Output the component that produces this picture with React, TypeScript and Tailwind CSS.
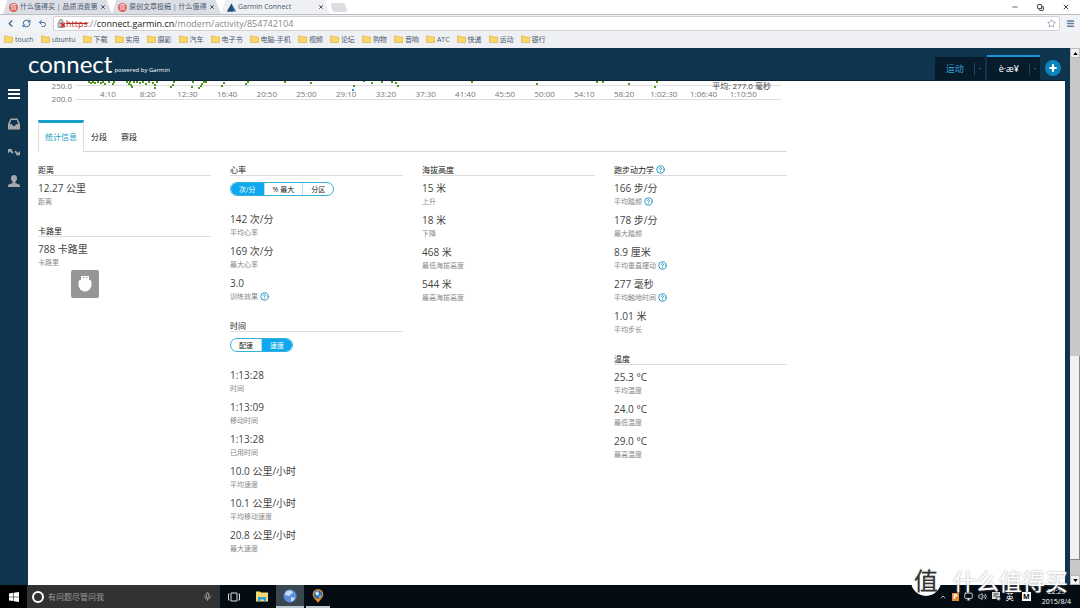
import { Menu, Minus, Mic, Plus, RefreshCw, Star, Undo2, X, ChevronLeft, ChevronUp, CircleHelp, Copy, Volume2, Monitor } from 'lucide-react'

type Stat = { value: string; label: string; help?: boolean }

const browserTabs = [
  { title: '什么值得买 | 品质消费第', color: 'bg-[#dd5f5b]', active: false },
  { title: '原创文章投稿 | 什么值得', color: 'bg-[#dd5f5b]', active: false },
  { title: 'Garmin Connect', color: '', active: true },
]

const bookmarks = ['touch', 'ubuntu', '下载', '实用', '摄影', '汽车', '电子书', '电脑-手机', '视频', '论坛', '购物', '音响', 'ATC', '快递', '运动', '银行']

const ticks = ['4:10', '8:20', '12:30', '16:40', '20:50', '25:00', '29:10', '33:20', '37:30', '41:40', '45:50', '50:00', '54:10', '58:20', '1:02:30', '1:06:40', '1:10:50']

const dots = [
  [60, 1], [62, 2], [64, 1], [66, 2], [69, 1], [72, 2], [74, 1], [76, 3], [80, 1], [84, 3], [85, 1], [98, 1], [100, 3], [101, 1], [102, 4], [103, 6], [105, 1], [108, 1],
  [111, 2], [114, 1], [117, 3], [120, 1], [124, 2], [126, 4], [126, 7], [128, 1], [142, 6], [144, 4], [145, 1], [163, 6], [164, 1], [170, 7], [172, 5], [173, 3], [175, 1], [177, 1],
  [193, 5], [195, 2], [217, 3], [219, 1], [256, 1], [282, 2], [325, 5], [335, 0], [343, 2], [353, 1], [363, 1], [367, 2], [369, 5], [443, 1], [508, 3], [568, 1], [574, 1], [600, 3], [626, 6], [628, 1],
]

const distance: Stat[] = [{ value: '12.27 公里', label: '距离' }]
const calories: Stat[] = [{ value: '788 卡路里', label: '卡路里' }]
const heartRate: Stat[] = [
  { value: '142 次/分', label: '平均心率' },
  { value: '169 次/分', label: '最大心率' },
  { value: '3.0', label: '训练效果', help: true },
]
const timing: Stat[] = [
  { value: '1:13:28', label: '时间' },
  { value: '1:13:09', label: '移动时间' },
  { value: '1:13:28', label: '已用时间' },
  { value: '10.0 公里/小时', label: '平均速度' },
  { value: '10.1 公里/小时', label: '平均移动速度' },
  { value: '20.8 公里/小时', label: '最大速度' },
]
const elevation: Stat[] = [
  { value: '15 米', label: '上升' },
  { value: '18 米', label: '下降' },
  { value: '468 米', label: '最低海拔高度' },
  { value: '544 米', label: '最高海拔高度' },
]
const dynamics: Stat[] = [
  { value: '166 步/分', label: '平均踏频', help: true },
  { value: '178 步/分', label: '最大踏频' },
  { value: '8.9 厘米', label: '平均垂直摆动', help: true },
  { value: '277 毫秒', label: '平均触地时间', help: true },
  { value: '1.01 米', label: '平均步长' },
]
const temperature: Stat[] = [
  { value: '25.3 °C', label: '平均温度' },
  { value: '24.0 °C', label: '最低温度' },
  { value: '29.0 °C', label: '最高温度' },
]

function Help() {
  return <CircleHelp size={9} strokeWidth={2.6} className="shrink-0 text-[#2196c4]" />
}

function Toggle({ items, selected }: { items: string[]; selected: number }) {
  return (
    <div className="mt-[6px] mb-[15px] flex h-[14px] w-fit overflow-hidden rounded-full border border-[#35b2dc] text-[7px]">
      {items.map((item, i) => (
        <button
          key={item}
          aria-pressed={i === selected}
          className={`flex items-center px-2 leading-none ${i > 0 ? 'border-l border-[#b5dfee]' : ''} ${i === selected ? 'bg-[#0fa8ee] text-white' : 'text-[#222]'}`}
        >
          {item}
        </button>
      ))}
    </div>
  )
}

function Section({ title, stats, help, toggle, selected = 0 }: { title: string; stats: Stat[]; help?: boolean; toggle?: string[]; selected?: number }) {
  return (
    <section>
      <h2 className="flex h-3 items-center gap-[2px] border-b border-[#dcdcdc] text-[8px] leading-none text-[#222]">
        {title}
        {help && <Help />}
      </h2>
      {toggle && <Toggle items={toggle} selected={selected} />}
      <ul className={`flex flex-col gap-[6px] ${toggle ? '' : 'mt-1'}`}>
        {stats.map((s) => (
          <li key={s.label}>
            <p className="h-[17px] text-[10px] leading-[17px] whitespace-nowrap text-[#444]">{s.value}</p>
            <p className="flex h-[9px] items-center gap-[2px] text-[7px] leading-[9px] text-[#888]">
              {s.label}
              {s.help && <Help />}
            </p>
          </li>
        ))}
      </ul>
    </section>
  )
}

function Browser() {
  return (
    <header>
      <div className="flex h-[14px] items-end bg-white pl-[3px]">
        {browserTabs.map((tab) => (
          <div
            key={tab.title}
            className={`flex h-[14px] w-[109px] items-center pr-[6px] pl-[6px] text-[7px] text-[#47566b] [clip-path:polygon(0_100%,4%_0,95%_0,100%_100%)] ${tab.active ? 'bg-[#eff0f4]' : 'bg-[#dcdee5]'}`}
          >
            {tab.active ? (
              <svg viewBox="0 0 9 9" className="mr-[2px] size-[9px] shrink-0">
                <path d="M4.5 0.5 9 8.5H0Z" fill="#1d6fae" />
                <path d="M4.5 0.5 6 8.5H0Z" fill="#2b4d74" />
              </svg>
            ) : (
              <span className={`mr-[2px] flex size-[9px] shrink-0 items-center justify-center rounded-full text-[6px] leading-none text-white ${tab.color}`}>值</span>
            )}
            <span className="flex-1 leading-[14px] whitespace-nowrap">{tab.title}</span>
            <button aria-label="关闭标签页">
              <X size={6} strokeWidth={4} />
            </button>
          </div>
        ))}
        <button aria-label="新标签页" className="mb-[2px] h-[9px] w-[18px] rounded-sm bg-[#dcdee2] [clip-path:polygon(0_0,80%_0,100%_100%,18%_100%)]" />
        <div className="ml-auto flex h-full items-center gap-[18px] pr-[10px] text-[#222]">
          <button aria-label="最小化"><Minus size={8} /></button>
          <button aria-label="还原"><Copy size={7} strokeWidth={3} className="-scale-x-100 rotate-90" /></button>
          <button aria-label="关闭"><X size={8} strokeWidth={2.5} /></button>
        </div>
      </div>

      <div className="flex h-[18px] items-center border-t border-[#bcbec2] bg-[#f2f3f6] px-[5px] text-[#2f6193]">
        <button aria-label="后退" className="mr-[6px]"><ChevronLeft size={11} strokeWidth={2.5} /></button>
        <button aria-label="刷新" className="mr-[7px]"><RefreshCw size={9} strokeWidth={2.5} /></button>
        <button aria-label="撤销" className="mr-[6px]"><Undo2 size={9} strokeWidth={2.5} /></button>
        <div className="flex h-[15px] flex-1 items-center rounded-xs border border-[#cfd1d5] bg-white px-[3px]">
          <svg viewBox="0 0 9 9" className="size-[9px]">
            <path d="M1 4h6v4.500H1ZM2 4V2.500a2 2 0 0 1 4 0V4" fill="#c9c9c9" stroke="#888" strokeWidth="0.800" />
            <path d="M4 4l4 4M8 4l-4 4" stroke="#cc2020" strokeWidth="1.500" />
          </svg>
          <p className="flex-1 text-[9px] leading-[13px] text-[#888]">
            <span className="text-[#c02a2a] line-through">https</span>://<span className="text-[#222]">connect.garmin.cn</span>/modern/activity/854742104
          </p>
          <Star size={9} className="text-[#7d93ab]" />
        </div>
        <button aria-label="菜单" className="ml-[6px]"><Menu size={9} strokeWidth={4} className="text-[#64809c]" /></button>
      </div>

      <nav className="flex h-4 items-center gap-[7px] bg-[#eff0f3] px-[4px] pb-[2px] text-[7px] text-[#4b5a6e]">
        {bookmarks.map((b) => (
          <a key={b} href="#" className="flex items-center gap-[2px] leading-none">
            <svg viewBox="0 0 9 8" className="h-2 w-[9px]">
              <path d="M.5 1h3l1 1h4v5.500h-8Z" fill="#fbd768" stroke="#d9a93a" strokeWidth="0.600" />
            </svg>
            {b}
          </a>
        ))}
      </nav>
    </header>
  )
}

function SiteHeader() {
  return (
    <div className="flex h-8 items-end pl-7 text-white">
      <a href="#" className="flex h-full items-center">
        <span className="font-[family-name:Lato] text-[24px] leading-none">connect</span>
        <span className="mt-[11px] ml-[2px] text-[6px] leading-none">powered by Garmin</span>
      </a>
      <nav className="ml-auto flex items-end gap-[2px] text-[9px]">
        <a href="#" className="flex h-[23px] items-center bg-[#071c2b] pl-[11px] text-[#2f9fdd]">
          运动
          <span className="ml-[10px] flex h-3 w-[11px] items-center justify-center border-l border-[#24465c] text-[9px] text-[#9ab]">·</span>
        </a>
        <a href="#" className="flex h-[25px] items-center border-t-2 border-[#1c94d8] bg-[#071c2b] pl-3">
          è·æ¥
          <span className="ml-[10px] flex h-3 w-[11px] items-center justify-center border-l border-[#24465c] text-[9px] text-[#9ab]">·</span>
        </a>
      </nav>
      <button aria-label="添加" className="mr-[9px] mb-1 ml-[5px] flex size-4 items-center justify-center rounded-full bg-[#0c83b9]">
        <Plus size={10} strokeWidth={5} />
      </button>
    </div>
  )
}

function Sidebar() {
  return (
    <nav className="flex w-7 flex-col items-center pt-2 text-[#a5a9ab]">
      <button aria-label="菜单">
        <svg viewBox="0 0 12 12" className="size-3">
          <path d="M0 2h12M0 6h12M0 10h12" stroke="#fff" strokeWidth="2" />
        </svg>
      </button>
      <button aria-label="收件箱" className="mt-[18px]">
        <svg viewBox="0 0 12 12" className="size-3" fill="currentColor" fillRule="evenodd">
          <path d="M2.500.5h7L12 6v5.500H0V6ZM3.300 2 1.700 6.300h2.500l.8 1.700h2l.8-1.700h2.500L8.700 2Z" />
        </svg>
      </button>
      <button aria-label="连接" className="mt-4">
        <svg viewBox="0 0 12 12" className="size-3" fill="currentColor">
          <path d="M0 3h4.500L3.500 4 5.600 6.400 4.400 7.700 2 5.400 0 7.200ZM12 9.200H7.500l1-1L6.400 5.800 7.600 4.500 10 6.900 12 5Z" />
        </svg>
      </button>
      <button aria-label="个人资料" className="mt-[17px]">
        <svg viewBox="0 0 12 12" className="size-3" fill="currentColor">
          <path d="M6 0c2 0 3 1.400 3 3.200C9 5 8.200 6.200 7.300 7v1l4 1.600c.5.200.7.800.7 2.400H0c0-1.600.2-2.200.7-2.400l4-1.600V7C3.800 6.200 3 5 3 3.200 3 1.400 4 0 6 0Z" />
        </svg>
      </button>
    </nav>
  )
}

function Chart() {
  return (
    <svg viewBox="0 0 760 25" className="block h-[25px] w-[760px]" fontSize="8">
      <path d="M48 4.500h705M48 18.500h705" stroke="#ddd" />
      <g fill="#4e9a1c">
        {dots.map(([x, y]) => (
          <rect key={`${x}-${y}`} x={x} y={y - 1} width="2" height="2" />
        ))}
      </g>
      <rect x="324" y="8" width="2" height="2" fill="#1d9be0" />
      <g fill="#777">
        <text x="44" y="8" textAnchor="end">250.0</text>
        <text x="44" y="21" textAnchor="end">200.0</text>
        {ticks.map((t, i) => (
          <text key={t} x={80 + i * 39.7} y="16" textAnchor="middle">{t}</text>
        ))}
      </g>
      <text x="743" y="8" textAnchor="end" fill="#444">平均: 277.0 毫秒</text>
    </svg>
  )
}

function Taskbar() {
  return (
    <footer className="flex h-[23px] items-stretch bg-[#040d13] text-white">
      <button aria-label="开始" className="flex w-[27px] items-center justify-center bg-black">
        <svg viewBox="0 0 10 10" className="size-[10px]" fill="#fff">
          <path d="M0 1.400 4.400.8v3.900H0ZM4.900.7 10 0v4.700H4.900ZM0 5.200h4.400v3.900L0 8.500ZM4.900 5.200H10V10L4.900 9.200Z" />
        </svg>
      </button>
      <label className="flex w-[193px] items-center bg-[#323232] pr-2 pl-[5px]">
        <span className="mr-1 size-3 shrink-0 rounded-full border-2 border-white" />
        <input aria-label="搜索" placeholder="有问题尽管问我" className="w-full min-w-0 flex-1 bg-transparent text-[8px] placeholder:text-[#999]" />
        <Mic size={9} className="shrink-0 text-[#bbb]" />
      </label>
      <button aria-label="任务视图" className="flex w-7 items-center justify-center">
        <svg viewBox="0 0 12 10" className="h-[10px] w-3" fill="none" stroke="#ddd">
          <path d="M3 1h6v8H3ZM1.500 2H.5v6h1M10.500 2h1v6h-1" />
        </svg>
      </button>
      <button aria-label="文件资源管理器" className="flex w-7 items-center justify-center">
        <svg viewBox="0 0 12 11" className="h-[11px] w-3">
          <path d="M0 .5h4l1 1h7v9H0Z" fill="#f8d775" />
          <path d="M2 6h8v4.500H8V8.500H4v2H2Z" fill="#27a6de" />
        </svg>
      </button>
      <button aria-label="浏览器" className="flex w-7 items-center justify-center border-b-2 border-[#bcc8d0] bg-[#3b474f]">
        <svg viewBox="0 0 14 14" className="size-[14px]">
          <circle cx="7" cy="7" r="6.500" fill="#5b8fdc" />
          <path d="M3 2.500c3-2 6-1 7 1L6 7 2 6ZM8 8l4 1c-1 2-2 3-4 3.500Z" fill="#c6dcf8" />
        </svg>
      </button>
      <button aria-label="地图" className="ml-[2px] flex w-6 items-center justify-center border-b-2 border-[#bcc8d0]">
        <svg viewBox="0 0 12 14" className="h-[14px] w-3">
          <path d="M6 14C4 10.500.7 9 .7 5.300a5.300 5.300 0 0 1 10.600 0C11.300 9 8 10.500 6 14Z" fill="#e08a2c" />
          <circle cx="6" cy="5.500" r="4" fill="#2d6ca8" />
          <path d="M3 4l3-2 1 3-2 2ZM7 7l2-1-1 3Z" fill="#d9ecf5" />
        </svg>
      </button>
      <div className="ml-auto flex items-center gap-[5px] pr-[9px]">
        <ChevronUp size={8} />
        <span className="flex h-2 w-[7px] items-center justify-center bg-[#e58a2b] text-[7px] leading-none font-bold">P</span>
        <Monitor size={9} />
        <Volume2 size={9} />
        <svg viewBox="0 0 9 9" className="size-[9px]">
          <path d="M0 0h8v7H0Z" fill="#ddd" />
          <path d="M1.500 2h5M1.500 4h3" stroke="#333" />
          <circle cx="6.500" cy="6.500" r="2" fill="#ddd" stroke="#333" />
        </svg>
        <span className="text-[8px] leading-none">英</span>
        <span className="ml-[3px] flex size-[9px] items-center justify-center bg-white text-[7px] leading-none font-bold text-black">M</span>
        <p className="ml-[6px] text-center text-[7px] leading-[10px]">
          22:29
          <br />
          2015/8/4
        </p>
      </div>
    </footer>
  )
}

function Scrollbar() {
  return (
    <div className="flex w-[10px] flex-col bg-[#c8c8c8]">
      <div className="flex h-[10px] items-center justify-center border border-[#bbb] bg-[#f0f0f0]">
        <svg viewBox="0 0 6 4" className="h-[3px] w-[5px]"><path d="M0 4 3 0l3 4Z" /></svg>
      </div>
      <div className="grow-[299]" />
      <div className="grow-[203] border-r border-b border-[#888] bg-[#f1f1f1]" />
      <div className="grow-[15]" />
      <div className="flex h-[10px] items-center justify-center border border-[#bbb] bg-[#f0f0f0]">
        <svg viewBox="0 0 6 4" className="h-[3px] w-[5px]"><path d="M0 0h6L3 4Z" /></svg>
      </div>
    </div>
  )
}

export default function App() {
  return (
    <div className="relative flex min-h-screen flex-col overflow-hidden bg-white font-['Open_Sans','Noto_Sans_CJK_SC',sans-serif]">
      <Browser />
      <div className="flex flex-1">
        <div className="flex flex-1 flex-col bg-[#0f344e]">
          <SiteHeader />
          <div className="flex flex-1 pr-[5px]">
            <Sidebar />
            <main className="flex-1 overflow-hidden border-t border-[#0a2233] bg-white">
              <Chart />
              <div className="mr-4 ml-[10px] max-w-[749px]">
                <div role="tablist" className="mt-[14px] flex h-8 border-b border-[#d8d8d8] text-[8px] text-[#222]">
                  <button role="tab" aria-selected="true" className="-mb-px border-x border-t-[3px] border-x-[#ddd] border-t-[#189fc9] bg-white px-[6px] pb-[2px] text-[#1b9fc4]">统计信息</button>
                  <button role="tab" aria-selected="false" className="px-[7px] pt-[2px]">分段</button>
                  <button role="tab" aria-selected="false" className="px-[7px] pt-[2px]">赛段</button>
                </div>
                <div className="grid grid-cols-4 gap-x-[19px] pt-3">
                  <div className="flex flex-col gap-[19px]">
                    <Section title="距离" stats={distance} />
                    <div>
                      <Section title="卡路里" stats={calories} />
                      <button aria-label="设备" className="mt-[3px] ml-[33px] flex size-7 items-center justify-center rounded-xs bg-[#969696]">
                        <svg viewBox="0 0 14 16" className="h-4 w-[14px]">
                          <path d="M3 0h8v4H3Z" fill="#fff" />
                          <path d="M5 1.500h1.500M8 1.500h1.500" stroke="#969696" />
                          <path d="M2.500 4h9c1.400 0 2 .8 2 2v3a6.500 6.500 0 0 1-13 0V6c0-1.200.6-2 2-2Z" fill="#fff" />
                        </svg>
                      </button>
                    </div>
                  </div>
                  <div className="flex flex-col gap-[19px]">
                    <Section title="心率" stats={heartRate} toggle={['次/分', '% 最大', '分区']} />
                    <Section title="时间" stats={timing} toggle={['配速', '速度']} selected={1} />
                  </div>
                  <Section title="海拔高度" stats={elevation} />
                  <div className="flex flex-col gap-[19px]">
                    <Section title="跑步动力学" stats={dynamics} help />
                    <Section title="温度" stats={temperature} />
                  </div>
                </div>
              </div>
            </main>
          </div>
        </div>
        <Scrollbar />
      </div>
      <Taskbar />
      <div className="pointer-events-none absolute right-3 bottom-[11px] flex items-center gap-3 text-white">
        <span className="flex size-[30px] items-center justify-center rounded-full bg-white text-[24px] leading-none text-[#333] [text-shadow:0_-1px_1px_#aaa]">值</span>
        <span className="text-[23px] leading-8 [text-shadow:0_0_2px_#999]">什么值得买</span>
      </div>
    </div>
  )
}
